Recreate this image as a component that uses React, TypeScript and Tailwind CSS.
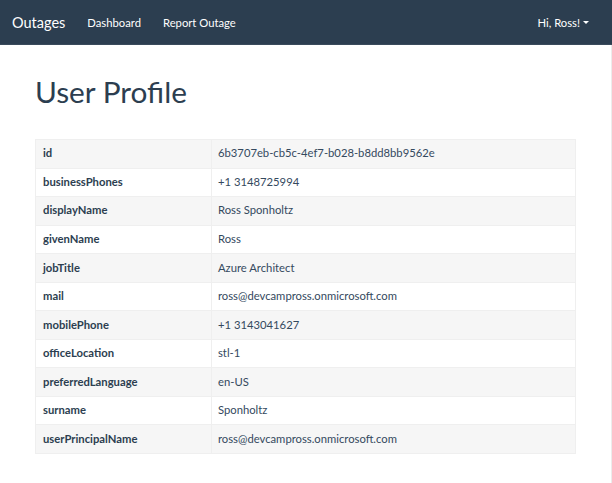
import React from 'react';

// profile fields as returned by graph /me
const profile: [string, string][] = [
  ['id', '6b3707eb-cb5c-4ef7-b028-b8dd8bb9562e'],
  ['businessPhones', '+1 3148725994'],
  ['displayName', 'Ross Sponholtz'],
  ['givenName', 'Ross'],
  ['jobTitle', 'Azure Architect'],
  ['mail', 'ross@devcampross.onmicrosoft.com'],
  ['mobilePhone', '+1 3143041627'],
  ['officeLocation', 'stl-1'],
  ['preferredLanguage', 'en-US'],
  ['surname', 'Sponholtz'],
  ['userPrincipalName', 'ross@devcampross.onmicrosoft.com'],
];

function Navbar() {
  return (
    <nav className="h-[45px] bg-[#2c3e50] flex items-center justify-between text-white border-b border-[#3a4b5c]">
      <div className="flex items-center">
        <span className="pl-[12px] pr-[11px] text-[14.5px] leading-[45px]">Outages</span>
        <a className="px-[11px] text-[11.25px] leading-[45px]">Dashboard</a>
        <a className="px-[11px] text-[11.25px] leading-[45px]">Report Outage</a>
      </div>
      <div className="flex items-center pr-[23px] text-[11.25px] leading-[45px]">
        <span>Hi, Ross!</span>
        <span className="ml-[3px] mt-[1px] w-0 h-0 border-l-[3px] border-r-[3px] border-t-[3px] border-l-transparent border-r-transparent border-t-white"></span>
      </div>
    </nav>
  );
}

export default function App() {
  return (
    <div className="min-h-screen bg-white font-['Lato','Liberation_Sans',sans-serif] text-[#2c3e50]">
      <Navbar />
      <div className="min-h-[438px] border-r border-[#ececec] px-[35px] pt-[31px]">
        <h1 className="text-[29.8px] leading-[32px] font-normal">User Profile</h1>
        <table className="mt-[31px] w-[541px] border-collapse text-[11.25px]">
          <tbody>
            {profile.map(([key, value], i) => (
              <tr key={key} className={i % 2 === 0 ? 'bg-[#f6f6f6]' : 'bg-white'}>
                <th className="h-[28.55px] w-[176px] px-[7px] py-0 text-left font-bold border border-[#efefef]">
                  {key}
                </th>
                <td className="h-[28.55px] px-[6px] py-0 text-[#34495e] border border-[#efefef]">{value}</td>
              </tr>
            ))}
          </tbody>
        </table>
      </div>
    </div>
  );
}
